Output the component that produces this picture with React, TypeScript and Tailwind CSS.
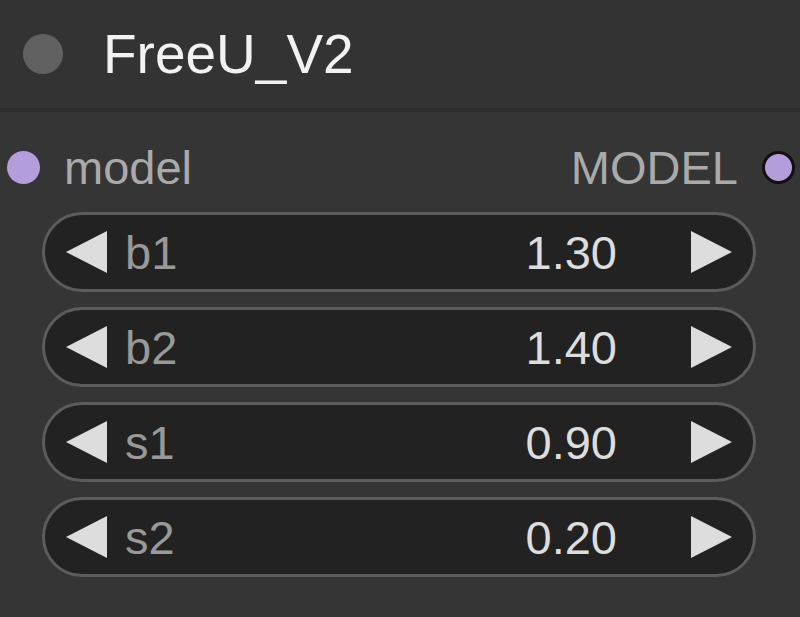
import React from "react";

const widgets = [
  { label: "b1", value: "1.30" },
  { label: "b2", value: "1.40" },
  { label: "s1", value: "0.90" },
  { label: "s2", value: "0.20" },
];

function LeftArrow() {
  return (
    <svg width="42" height="42" viewBox="0 0 42 42" className="shrink-0">
      <polygon points="0,21 41,0 41,42" fill="#dddddd" />
    </svg>
  );
}

function RightArrow() {
  return (
    <svg width="42" height="42" viewBox="0 0 42 42" className="shrink-0">
      <polygon points="1,0 42,21 1,42" fill="#dddddd" />
    </svg>
  );
}

export default function App() {
  return (
    <div
      className="w-[800px] h-[617px] bg-[#353535] flex flex-col overflow-hidden"
      style={{ fontFamily: '"Liberation Sans", Arial, sans-serif' }}
    >
      <div className="h-[108px] bg-[#333333] flex items-center shrink-0">
        <div className="ml-[23px] w-[40px] h-[40px] rounded-full bg-[#616161]" />
        <div className="ml-[40px] text-[55px] leading-none text-[#f2f2f2]">FreeU_V2</div>
      </div>
      <div className="h-[4px] bg-[#2c2c2c] shrink-0" />
      <div className="mt-[15px] h-[80px] flex items-center shrink-0">
        <div className="ml-[7px] w-[33px] h-[33px] rounded-full bg-[#b39ddb]" />
        <div className="ml-[24px] text-[47px] leading-none text-[#aaaaaa]">model</div>
        <div className="flex-1" />
        <div className="text-[47px] leading-none text-[#aaaaaa]">MODEL</div>
        <div className="ml-[24px] mr-[5px] w-[33px] h-[33px] rounded-full bg-[#b39ddb] border-[3px] border-[#111111]" />
      </div>
      <div className="mt-[5px] ml-[42px] w-[714px] flex flex-col gap-[15px]">
        {widgets.map((w) => (
          <div
            key={w.label}
            className="h-[80px] rounded-full border-[3px] border-[#5c5c5c] bg-[#222222] flex items-center pl-[21px] pr-[21px]"
          >
            <LeftArrow />
            <div className="ml-[17px] text-[47px] leading-none text-[#999999]">{w.label}</div>
            <div className="flex-1" />
            <div className="text-[47px] leading-none text-[#dddddd]">{w.value}</div>
            <div className="w-[73px]" />
            <RightArrow />
          </div>
        ))}
      </div>
    </div>
  );
}
